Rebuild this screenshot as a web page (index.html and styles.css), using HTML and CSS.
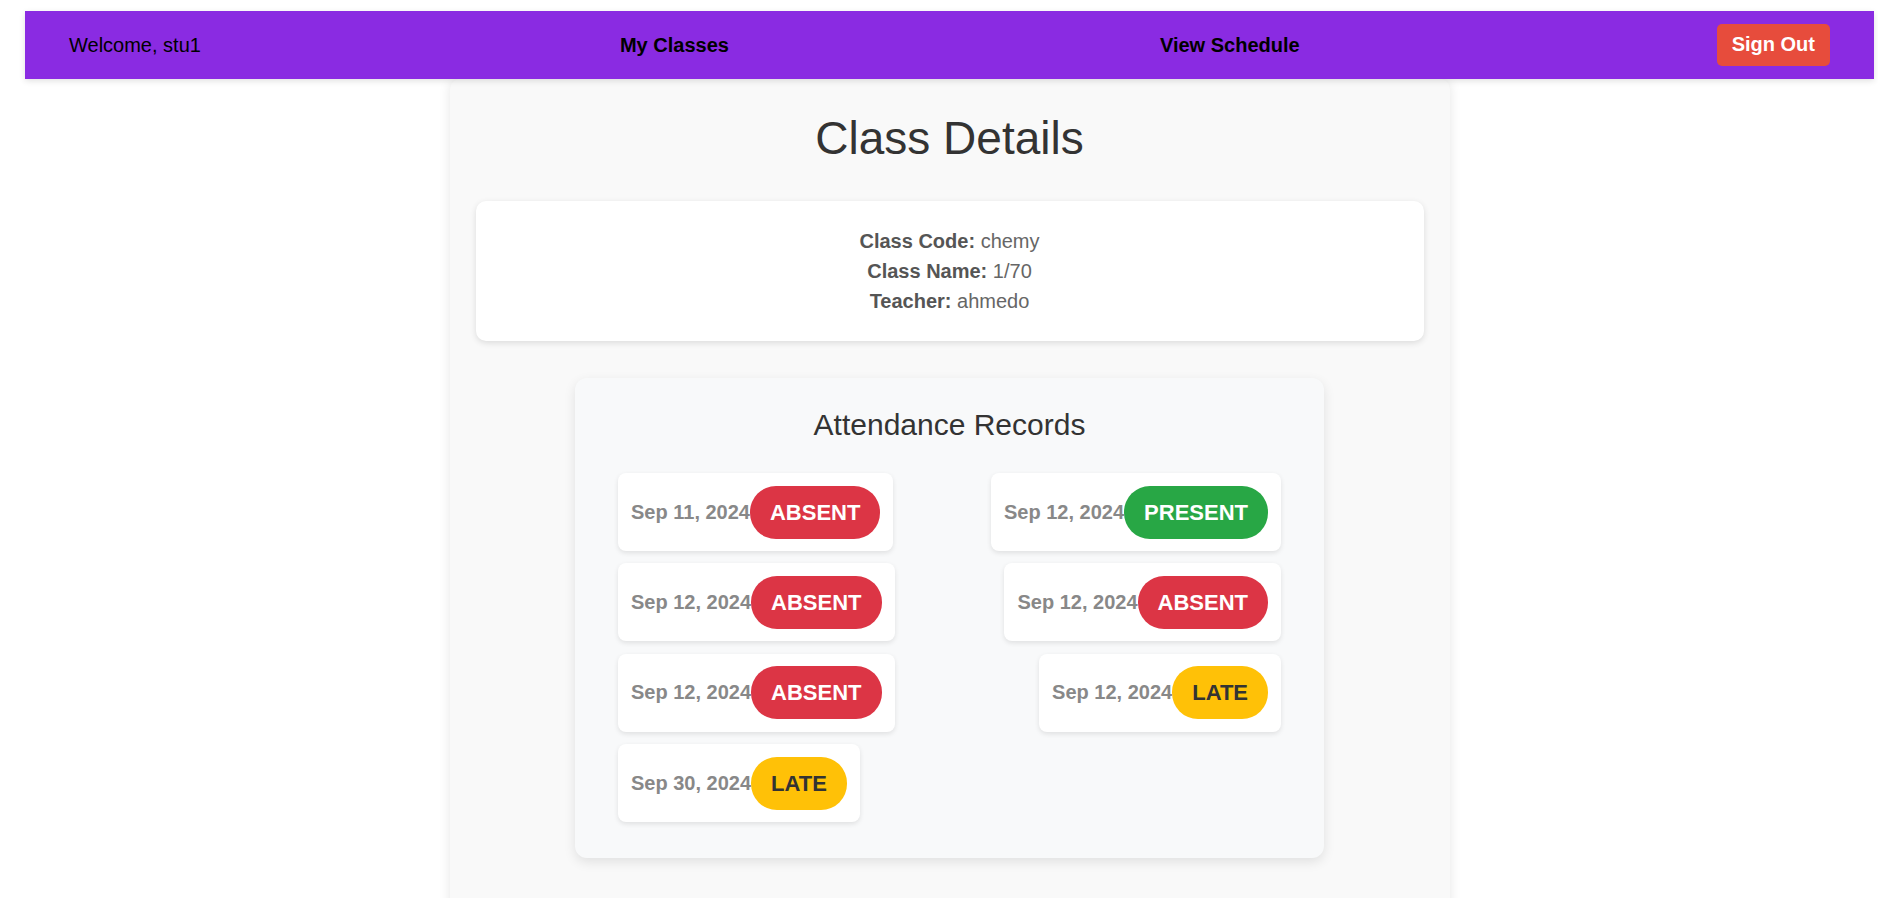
FILE: index.html
```html
<!DOCTYPE html>
<html lang="en">
<head>
<meta charset="utf-8">
<title>Class Details</title>
<link rel="stylesheet" href="styles.css">
</head>
<body>
<div class="page">
  <nav class="navbar">
    <span class="welcome">Welcome, stu1</span>
    <a class="nav-link nav-first" href="#">My Classes</a>
    <a class="nav-link" href="#">View Schedule</a>
    <button class="signout">Sign Out</button>
  </nav>
  <main class="details-card">
    <h1 class="title">Class Details</h1>
    <section class="info-box">
      <p class="info-line"><strong>Class Code:</strong> <span class="val">chemy</span></p>
      <p class="info-line"><strong>Class Name:</strong> <span class="val">1/70</span></p>
      <p class="info-line"><strong>Teacher:</strong> <span class="val">ahmedo</span></p>
    </section>
    <section class="attendance">
      <h2 class="att-title">Attendance Records</h2>
      <div class="records">
        <div class="record"><span class="date">Sep 11, 2024</span><span class="badge absent">ABSENT</span></div>
        <div class="record"><span class="date">Sep 12, 2024</span><span class="badge present">PRESENT</span></div>
        <div class="record"><span class="date">Sep 12, 2024</span><span class="badge absent">ABSENT</span></div>
        <div class="record"><span class="date">Sep 12, 2024</span><span class="badge absent">ABSENT</span></div>
        <div class="record"><span class="date">Sep 12, 2024</span><span class="badge absent">ABSENT</span></div>
        <div class="record"><span class="date">Sep 12, 2024</span><span class="badge late">LATE</span></div>
        <div class="record"><span class="date">Sep 30, 2024</span><span class="badge late">LATE</span></div>
      </div>
    </section>
  </main>
</div>
</body>
</html>
```
FILE: styles.css
```css
* { box-sizing: border-box; }
html, body { margin: 0; padding: 0; background: #ffffff; }
body { font-family: "Liberation Sans", Arial, sans-serif; }

.page {
  padding: 11px 4px 0 25px;
}

.navbar {
  position: relative;
  z-index: 2;
  height: 68px;
  background: #8a2be2;
  display: flex;
  align-items: center;
  justify-content: space-between;
  padding: 0 44px;
  box-shadow: 0 2px 6px rgba(0, 0, 0, 0.12);
}
.welcome { font-size: 20px; color: #000; }
.nav-link { font-size: 20px; font-weight: bold; color: #000; text-decoration: none; }
.nav-first { margin-left: 2px; margin-right: 14px; }
.signout {
  font-family: inherit;
  font-size: 20px;
  font-weight: bold;
  color: #fff;
  background: #e74c3c;
  border: none;
  border-radius: 5px;
  padding: 9px 15px 10px;
  line-height: 23px;
}

.details-card {
  position: relative;
  z-index: 1;
  width: 1000px;
  margin: 0 auto;
  background: #f9f9f9;
  border-radius: 10px;
  box-shadow: 0 0 12px rgba(0, 0, 0, 0.1);
  padding: 33px 26px 60px;
}
.title {
  margin: 0;
  text-align: center;
  font-size: 46px;
  font-weight: normal;
  line-height: 53px;
  color: #333;
}
.info-box {
  margin-top: 36px;
  background: #fff;
  border-radius: 10px;
  box-shadow: 0 2px 6px rgba(0, 0, 0, 0.12);
  padding: 25px 20px;
  text-align: center;
}
.info-line {
  margin: 0;
  font-size: 20px;
  line-height: 30px;
  color: #666;
}
.info-line strong { color: #555; }

.attendance {
  width: 749px;
  margin: 37px auto 0;
  background: #f8f9fa;
  border-radius: 12px;
  box-shadow: 0 4px 12px rgba(0, 0, 0, 0.1);
  padding: 30px 43px 36px;
}
.att-title {
  margin: 0 0 31px;
  text-align: center;
  font-size: 30px;
  font-weight: normal;
  line-height: 34px;
  color: #333;
}
.records {
  display: flex;
  flex-wrap: wrap;
  justify-content: space-between;
  row-gap: 12.4px;
}
.record {
  display: flex;
  align-items: center;
  background: #fff;
  border-radius: 8px;
  box-shadow: 0 2px 5px rgba(0, 0, 0, 0.1);
  padding: 12.5px 13px;
}
.date {
  font-size: 20px;
  font-weight: bold;
  color: #888;
}
.badge {
  font-size: 22px;
  font-weight: bold;
  line-height: 25px;
  padding: 14px 20px;
  border-radius: 26px;
  color: #fff;
}
.absent { background: #dc3545; }
.present { background: #28a745; }
.late { background: #ffc107; color: #333; }
```
